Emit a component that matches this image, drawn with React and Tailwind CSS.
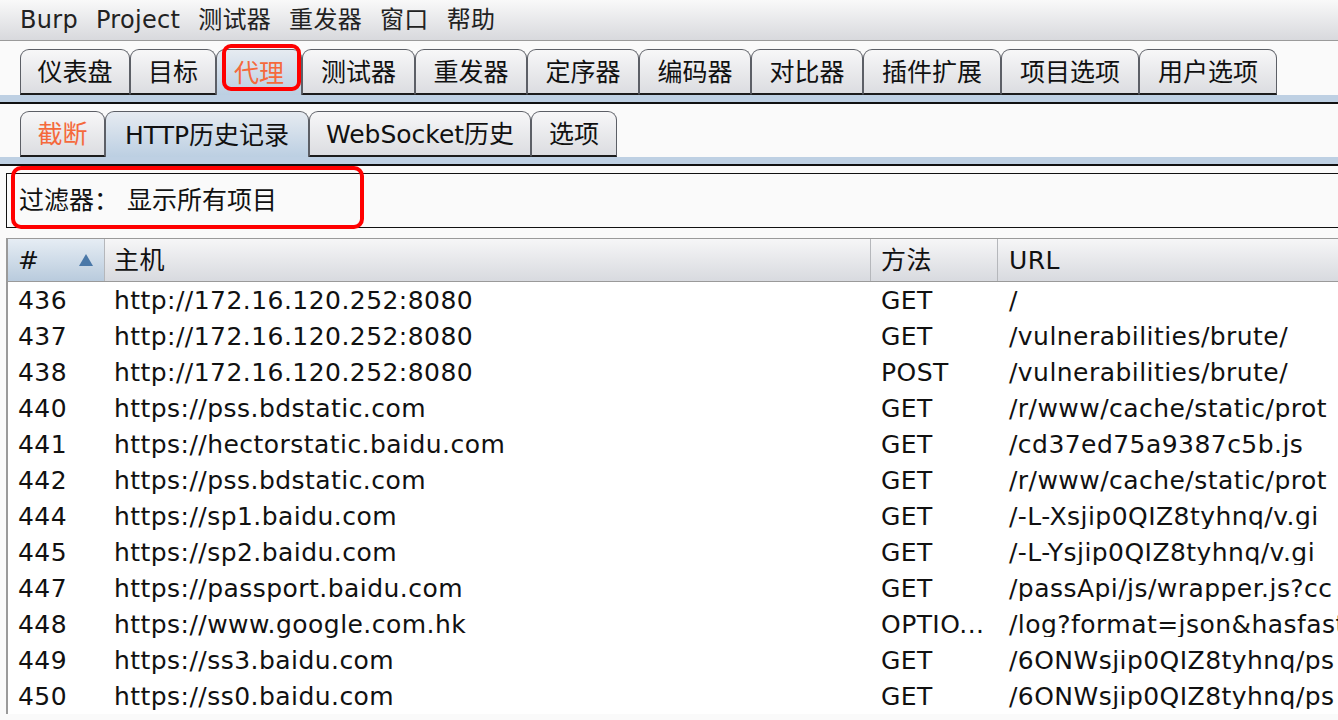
const FONT = "font-['DejaVu_Sans','Noto_Sans_CJK_SC',sans-serif]";

const MENU = ['Burp', 'Project', '测试器', '重发器', '窗口', '帮助'];

const MAIN_TABS = [
  { label: '仪表盘', w: 'w-[110px]' },
  { label: '目标', w: 'w-[86px]' },
  { label: '代理', w: 'w-[86px]', active: true, marked: true },
  { label: '测试器', w: 'w-[113px]' },
  { label: '重发器', w: 'w-[112px]' },
  { label: '定序器', w: 'w-[112px]' },
  { label: '编码器', w: 'w-[112px]' },
  { label: '对比器', w: 'w-[112px]' },
  { label: '插件扩展', w: 'w-[138px]' },
  { label: '项目选项', w: 'w-[138px]' },
  { label: '用户选项', w: 'w-[138px]' },
];

const SUB_TABS = [
  { label: '截断', w: 'w-[85px]', orange: true },
  { label: 'HTTP历史记录', w: 'w-[204px]', active: true },
  { label: 'WebSocket历史', w: 'w-[222px]' },
  { label: '选项', w: 'w-[86px]' },
];

const ROWS = [
  ['436', 'http://172.16.120.252:8080', 'GET', '/'],
  ['437', 'http://172.16.120.252:8080', 'GET', '/vulnerabilities/brute/'],
  ['438', 'http://172.16.120.252:8080', 'POST', '/vulnerabilities/brute/'],
  ['440', 'https://pss.bdstatic.com', 'GET', '/r/www/cache/static/prot'],
  ['441', 'https://hectorstatic.baidu.com', 'GET', '/cd37ed75a9387c5b.js'],
  ['442', 'https://pss.bdstatic.com', 'GET', '/r/www/cache/static/prot'],
  ['444', 'https://sp1.baidu.com', 'GET', '/-L-Xsjip0QIZ8tyhnq/v.gi'],
  ['445', 'https://sp2.baidu.com', 'GET', '/-L-Ysjip0QIZ8tyhnq/v.gi'],
  ['447', 'https://passport.baidu.com', 'GET', '/passApi/js/wrapper.js?cc'],
  ['448', 'https://www.google.com.hk', 'OPTIO...', '/log?format=json&hasfast'],
  ['449', 'https://ss3.baidu.com', 'GET', '/6ONWsjip0QIZ8tyhnq/ps'],
  ['450', 'https://ss0.baidu.com', 'GET', '/6ONWsjip0QIZ8tyhnq/ps'],
];

const Tab = ({ tab, height }) => (
  <div
    className={`relative flex ${tab.w} ${height} items-center justify-center rounded-t-[9px] border-x border-t border-[#5c5f66] pt-[2px] ${
      tab.active
        ? 'bg-gradient-to-b from-[#e6ebf1] to-[#bccfe2]'
        : 'border-b-2 border-b-[#1c1c1c] bg-gradient-to-b from-[#f7f7f8] to-[#dcdde1]'
    }`}
  >
    <span className={tab.orange || tab.marked ? 'text-[#f5693c]' : 'text-[#111]'}>{tab.label}</span>
    {tab.marked && (
      <div className="pointer-events-none absolute -top-[6px] left-[5px] h-[47px] w-[79px] rounded-[9px] border-[4px] border-[#ff0000]" />
    )}
  </div>
);

const TabStrip = ({ tabs, height, pt }) => (
  <div className={pt}>
    <div className="flex items-end pl-[20px]">
      {tabs.map((tab) => (
        <Tab key={tab.label} tab={tab} height={height} />
      ))}
    </div>
    <div className="h-[7px] bg-[#bed0e3]" />
    <div className="h-[2px] bg-[#111]" />
  </div>
);

export default function App() {
  return (
    <div className={`h-[720px] w-full overflow-hidden bg-[#fafafa] text-[25px] leading-none ${FONT}`}>
      {/* menu bar */}
      <div className="flex h-[41px] items-center gap-[18px] border-b border-[#9a9a9a] bg-gradient-to-b from-[#f9f9f9] to-[#d8d9dd] pl-[20px] text-[24px] tracking-[0.3px] text-[#222]">
        {MENU.map((m) => (
          <span key={m}>{m}</span>
        ))}
      </div>

      <TabStrip tabs={MAIN_TABS} height="h-[46px]" pt="pt-[8px]" />
      <TabStrip tabs={SUB_TABS} height="h-[46px]" pt="pt-[7px]" />

      {/* filter */}
      <div className="relative mt-[7px] ml-[6px] flex h-[55px] items-center border-y-[1.5px] border-l-[1.5px] border-[#111] pl-[12px] text-[#111]">
        <span>过滤器：&nbsp;显示所有项目</span>
        <div className="pointer-events-none absolute -top-[8px] left-[4px] h-[63px] w-[353px] rounded-[10px] border-[4px] border-[#ff0000]" />
      </div>

      {/* table */}
      <div className="mt-[10px] ml-[6px] border-l-2 border-[#9a9a9a] bg-white tracking-[0.45px]">
        <div className="flex h-[44px] border-y border-[#9a9a9a] text-[#111]">
          <div className="flex w-[97px] items-center justify-between border-r border-[#b5b7bb] bg-gradient-to-b from-[#e6edf4] to-[#b9cbdd] pl-[10px] pr-[10px]">
            <span>#</span>
            <svg width="16" height="14" viewBox="0 0 16 14">
              <path d="M8 1 L15 13 L1 13 Z" fill="#4a78a8" />
            </svg>
          </div>
          <div className="flex w-[766px] items-center border-r border-[#b5b7bb] bg-gradient-to-b from-[#f6f6f7] to-[#d8dadf] pl-[9px]">主机</div>
          <div className="flex w-[127px] items-center border-r border-[#b5b7bb] bg-gradient-to-b from-[#f6f6f7] to-[#d8dadf] pl-[10px]">方法</div>
          <div className="flex flex-1 items-center bg-gradient-to-b from-[#f6f6f7] to-[#d8dadf] pl-[11px]">URL</div>
        </div>
        {ROWS.map(([n, host, method, url]) => (
          <div key={n} className="flex h-[36px] items-center whitespace-nowrap text-[#111]">
            <div className="w-[97px] pl-[10px]">{n}</div>
            <div className="w-[766px] pl-[9px]">{host}</div>
            <div className="w-[127px] pl-[10px]">{method}</div>
            <div className="min-w-0 flex-1 overflow-hidden pl-[11px]">{url}</div>
          </div>
        ))}
      </div>
    </div>
  );
}
